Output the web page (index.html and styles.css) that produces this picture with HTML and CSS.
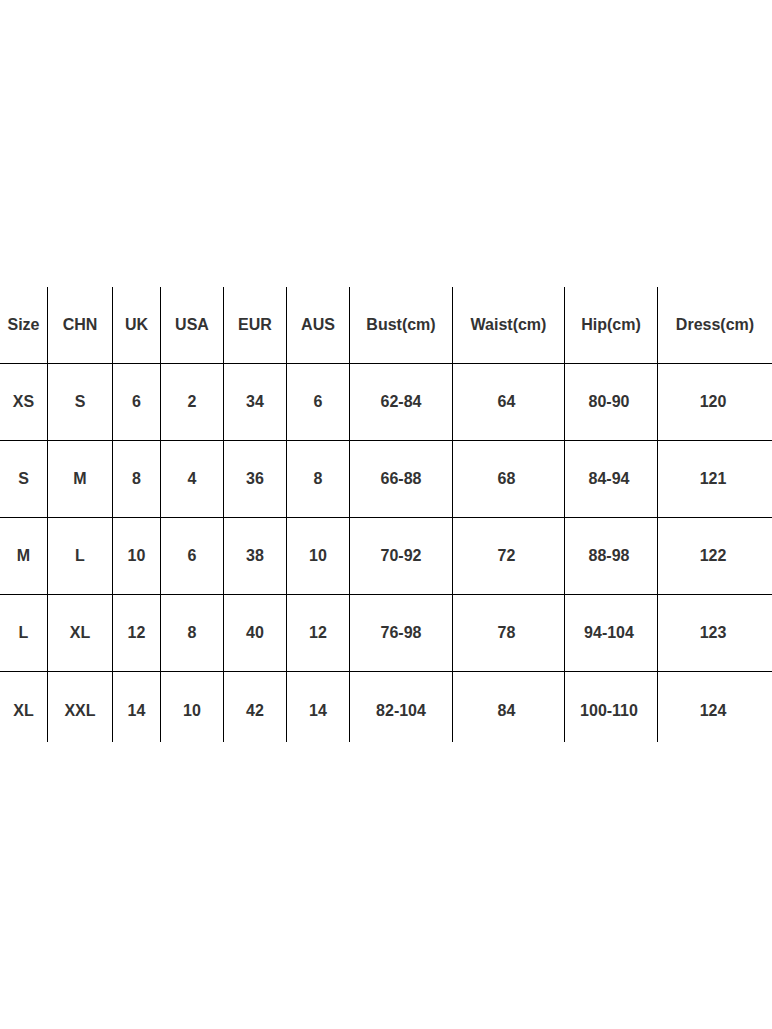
FILE: index.html
```html
<!DOCTYPE html>
<html>
<head>
<meta charset="utf-8">
<link rel="stylesheet" href="styles.css">
</head>
<body>
<div class="page">
  <div class="chart">
    <div class="cell">Size</div><div class="cell">CHN</div><div class="cell">UK</div><div class="cell">USA</div><div class="cell">EUR</div><div class="cell">AUS</div><div class="cell">Bust(cm)</div><div class="cell">Waist(cm)</div><div class="cell">Hip(cm)</div><div class="cell">Dress(cm)</div>
    <div class="cell">XS</div><div class="cell">S</div><div class="cell">6</div><div class="cell">2</div><div class="cell">34</div><div class="cell">6</div><div class="cell">62-84</div><div class="cell shift">64</div><div class="cell shift">80-90</div><div class="cell shift">120</div>
    <div class="cell">S</div><div class="cell">M</div><div class="cell">8</div><div class="cell">4</div><div class="cell">36</div><div class="cell">8</div><div class="cell">66-88</div><div class="cell shift">68</div><div class="cell shift">84-94</div><div class="cell shift">121</div>
    <div class="cell">M</div><div class="cell">L</div><div class="cell">10</div><div class="cell">6</div><div class="cell">38</div><div class="cell">10</div><div class="cell">70-92</div><div class="cell shift">72</div><div class="cell shift">88-98</div><div class="cell shift">122</div>
    <div class="cell">L</div><div class="cell">XL</div><div class="cell">12</div><div class="cell">8</div><div class="cell">40</div><div class="cell">12</div><div class="cell">76-98</div><div class="cell shift">78</div><div class="cell shift">94-104</div><div class="cell shift">123</div>
    <div class="cell last">XL</div><div class="cell last">XXL</div><div class="cell last">14</div><div class="cell last">10</div><div class="cell last">42</div><div class="cell last">14</div><div class="cell last">82-104</div><div class="cell last shift">84</div><div class="cell last shift">100-110</div><div class="cell last shift">124</div>
  </div>
</div>
</body>
</html>
```
FILE: styles.css
```css
html, body {
  margin: 0;
  padding: 0;
  background: #fff;
}
.page {
  width: 772px;
  height: 1029px;
  padding-top: 287px;
  box-sizing: border-box;
}
.chart {
  display: grid;
  grid-template-columns: 47px 65px 48px 63px 63px 63px 103px 112px 93px 115px;
  grid-auto-rows: 77px;
  height: 455px;
  overflow: hidden;
  font-family: "Liberation Sans", Arial, sans-serif;
  font-size: 16px;
  font-weight: bold;
  color: #333;
}
.cell {
  display: flex;
  align-items: center;
  justify-content: center;
  border-bottom: 1px solid #000;
  border-left: 1px solid #000;
  box-sizing: border-box;
  white-space: nowrap;
}
.cell:nth-child(10n+1) {
  border-left: none;
}
.shift {
  padding-right: 4px;
}
.last {
  border-bottom: none;
}
```
